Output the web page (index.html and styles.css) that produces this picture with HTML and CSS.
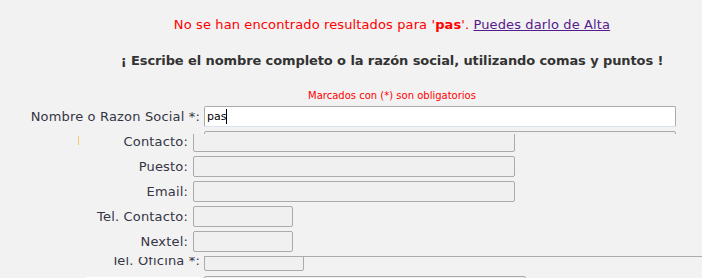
FILE: index.html
```html
<!DOCTYPE html>
<html>
<head>
    <link rel="stylesheet" href="styles.css">
</head>
<body>
    <!-- Search result message -->
    <div class="top">
        <p class="notice">No se han encontrado resultados para '<b>pas</b>'. <a href="#">Puedes darlo de Alta</a></p>
        <h3 class="hint">¡ Escribe el nombre completo o la razón social, utilizando comas y puntos !</h3>
        <div class="required">Marcados con (*) son obligatorios</div>
    </div>

    <!-- Alta form -->
    <div class="form">
        <div class="row">
            <label>Nombre o Razon Social *:</label>
            <div class="field white">pas<span class="caret"></span></div>
        </div>
        <div class="row">
            <label></label>
            <div class="field tall"></div>
        </div>
        <div class="row">
            <label>Tel. Oficina *:</label>
            <input type="text" class="field short">
        </div>
        <div class="row">
            <label class="blank"></label>
            <input type="text" class="field mid">
        </div>

        <!-- Contact panel drawn over the form -->
        <div class="contact">
            <div class="crow first">
                <label><span class="tick"></span>Contacto:</label>
                <input type="text" class="field mid">
            </div>
            <div class="crow">
                <label>Puesto:</label>
                <input type="text" class="field mid">
            </div>
            <div class="crow">
                <label>Email:</label>
                <input type="text" class="field mid">
            </div>
            <div class="crow">
                <label>Tel. Contacto:</label>
                <input type="text" class="field short">
            </div>
            <div class="crow">
                <label>Nextel:</label>
                <input type="text" class="field short">
            </div>
            <div class="rule"></div>
        </div>
    </div>
</body>
</html>
```

FILE: styles.css
```css
html, body {
    overflow: hidden;
}
body {
    font-family: "DejaVu Sans", Verdana, sans-serif;
    font-size: 13px;
    color: #353545;
    background: #f2f2f2;
    margin: 0;
    padding: 0;
}
.top {
    padding-left: 82px;
    text-align: center;
}
.notice {
    color: #ff0000;
    margin: 17px 0 0;
    line-height: 16px;
    letter-spacing: 0.12px;
}
.notice a {
    color: #551a8b;
}
.hint {
    font-size: 13px;
    color: #333;
    margin: 20px 0 0;
    line-height: 16px;
    letter-spacing: -0.1px;
}
.required {
    font-size: 10px;
    color: #ff0000;
    margin-top: 21px;
    line-height: 12px;
}
.form {
    position: relative;
    padding-top: 4px;
}
.row {
    display: flex;
    align-items: center;
    gap: 4px;
    margin-bottom: 4px;
}
.row label, .crow label {
    letter-spacing: 0.17px;
}
.row label {
    width: 200px;
    text-align: right;
}
.row .blank {
    align-self: flex-start;
    height: 21px;
    margin-top: 2px;
    width: 114px;
    margin-left: 86px;
    background: #fff;
}
.field {
    box-sizing: border-box;
    height: 21px;
    width: 322px;
    margin: 0;
    padding: 0 2px;
    border: 1px solid #ababab;
    border-radius: 2px;
    background: #f0f0f0;
    font: inherit;
}
.white {
    width: 472px;
    background: #fff;
    border-bottom-color: #dde3ea;
    color: #000;
    font-size: 11px;
    line-height: 19px;
}
.caret {
    display: inline-block;
    width: 1px;
    height: 15px;
    background: #000;
    vertical-align: -4px;
}
.tall {
    width: 472px;
    height: 115px;
}
.short {
    width: 100px;
}
.mid {
    width: 322px;
}
.contact {
    position: absolute;
    top: 32px;
    left: 0;
    width: 702px;
    height: 123px;
    overflow: hidden;
    background: #f2f2f2;
    display: flex;
    flex-direction: column;
}
.crow {
    display: flex;
    align-items: center;
    gap: 5px;
    margin-bottom: 4px;
}
.crow.first {
    margin-top: -3px;
}
.crow label {
    width: 188px;
    text-align: right;
}
.crow .tick {
    float: left;
    width: 1px;
    height: 9px;
    margin: 2px 0 0 78px;
    background: #f5c96b;
}
.rule {
    margin-top: auto;
    margin-left: 204px;
    border-top: 1px solid #ababab;
}
```
